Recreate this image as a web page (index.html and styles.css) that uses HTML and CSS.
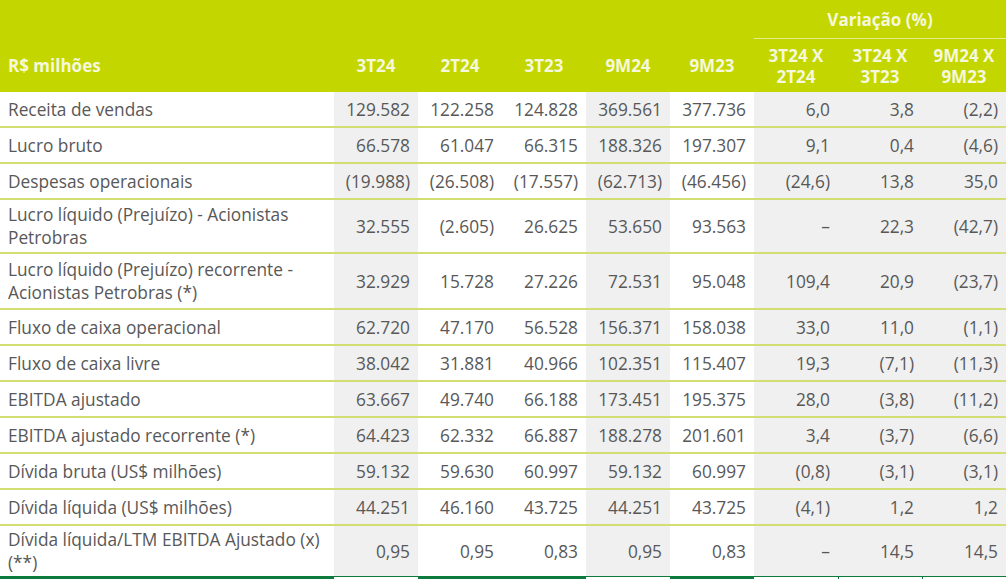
FILE: index.html
```html
<!DOCTYPE html>
<html lang="pt-BR">
<head>
<meta charset="utf-8">
<title>Destaques financeiros</title>
<link rel="stylesheet" href="styles.css">
</head>
<body>
<table class="results">
  <colgroup>
    <col class="c-label">
    <col class="c-num"><col class="c-num"><col class="c-num"><col class="c-num"><col class="c-num">
    <col class="c-num"><col class="c-num"><col class="c-last">
  </colgroup>
  <thead>
    <tr class="h1">
      <th class="blank" colspan="6"></th>
      <th class="var" colspan="3">Variação (%)</th>
    </tr>
    <tr class="h2">
      <th class="lbl">R$ milhões</th>
      <th>3T24</th>
      <th>2T24</th>
      <th>3T23</th>
      <th>9M24</th>
      <th>9M23</th>
      <th>3T24 X<br>2T24</th>
      <th>3T24 X<br>3T23</th>
      <th>9M24 X<br>9M23</th>
    </tr>
  </thead>
  <tbody>
    <tr class="row">
      <td class="lbl">Receita de vendas</td>
      <td class="g">129.582</td><td>122.258</td><td>124.828</td><td class="g">369.561</td><td>377.736</td>
      <td class="g">6,0</td><td class="g">3,8</td><td class="g">(2,2)</td>
    </tr>
    <tr class="row">
      <td class="lbl">Lucro bruto</td>
      <td class="g">66.578</td><td>61.047</td><td>66.315</td><td class="g">188.326</td><td>197.307</td>
      <td class="g">9,1</td><td class="g">0,4</td><td class="g">(4,6)</td>
    </tr>
    <tr class="row">
      <td class="lbl">Despesas operacionais</td>
      <td class="g">(19.988)</td><td>(26.508)</td><td>(17.557)</td><td class="g">(62.713)</td><td>(46.456)</td>
      <td class="g">(24,6)</td><td class="g">13,8</td><td class="g">35,0</td>
    </tr>
    <tr class="row two">
      <td class="lbl">Lucro líquido (Prejuízo) - Acionistas<br>Petrobras</td>
      <td class="g">32.555</td><td>(2.605)</td><td>26.625</td><td class="g">53.650</td><td>93.563</td>
      <td class="g">–</td><td class="g">22,3</td><td class="g">(42,7)</td>
    </tr>
    <tr class="row two tall">
      <td class="lbl">Lucro líquido (Prejuízo) recorrente -<br>Acionistas Petrobras (*)</td>
      <td class="g">32.929</td><td>15.728</td><td>27.226</td><td class="g">72.531</td><td>95.048</td>
      <td class="g">109,4</td><td class="g">20,9</td><td class="g">(23,7)</td>
    </tr>
    <tr class="row">
      <td class="lbl">Fluxo de caixa operacional</td>
      <td class="g">62.720</td><td>47.170</td><td>56.528</td><td class="g">156.371</td><td>158.038</td>
      <td class="g">33,0</td><td class="g">11,0</td><td class="g">(1,1)</td>
    </tr>
    <tr class="row">
      <td class="lbl">Fluxo de caixa livre</td>
      <td class="g">38.042</td><td>31.881</td><td>40.966</td><td class="g">102.351</td><td>115.407</td>
      <td class="g">19,3</td><td class="g">(7,1)</td><td class="g">(11,3)</td>
    </tr>
    <tr class="row">
      <td class="lbl">EBITDA ajustado</td>
      <td class="g">63.667</td><td>49.740</td><td>66.188</td><td class="g">173.451</td><td>195.375</td>
      <td class="g">28,0</td><td class="g">(3,8)</td><td class="g">(11,2)</td>
    </tr>
    <tr class="row">
      <td class="lbl">EBITDA ajustado recorrente (*)</td>
      <td class="g">64.423</td><td>62.332</td><td>66.887</td><td class="g">188.278</td><td>201.601</td>
      <td class="g">3,4</td><td class="g">(3,7)</td><td class="g">(6,6)</td>
    </tr>
    <tr class="row">
      <td class="lbl">Dívida bruta (US$ milhões)</td>
      <td class="g">59.132</td><td>59.630</td><td>60.997</td><td class="g">59.132</td><td>60.997</td>
      <td class="g">(0,8)</td><td class="g">(3,1)</td><td class="g">(3,1)</td>
    </tr>
    <tr class="row">
      <td class="lbl">Dívida líquida (US$ milhões)</td>
      <td class="g">44.251</td><td>46.160</td><td>43.725</td><td class="g">44.251</td><td>43.725</td>
      <td class="g">(4,1)</td><td class="g">1,2</td><td class="g">1,2</td>
    </tr>
    <tr class="row two last">
      <td class="lbl">Dívida líquida/LTM EBITDA Ajustado (x)<br>(**)</td>
      <td class="g">0,95</td><td>0,95</td><td>0,83</td><td class="g">0,95</td><td>0,83</td>
      <td class="g">–</td><td class="g">14,5</td><td class="g">14,5</td>
    </tr>
  </tbody>
  <tfoot>
    <tr class="foot">
      <td></td><td class="g"></td><td></td><td></td><td class="g"></td><td></td>
      <td class="v"></td><td class="v"></td><td class="v"></td>
    </tr>
  </tfoot>
</table>
</body>
</html>
```

FILE: styles.css
```css
html, body {
  margin: 0;
  padding: 0;
  background: #ffffff;
}

.results {
  width: 1006px;
  table-layout: fixed;
  border-collapse: separate;
  border-spacing: 0;
  font-family: "Open Sans", "Noto Sans", sans-serif;
  font-size: 17.3px;
  color: #585858;
}

.c-label { width: 334px; }
.c-num { width: 84px; }
.c-last { width: 84px; }

/* header */
.results thead th {
  background: #c4d600;
  color: #f5f8dc;
  font-weight: 700;
  font-size: 17px;
  line-height: 21px;
  padding: 0;
  text-align: center;
}

.h1 { height: 39px; }
.h1 .var {
  border-bottom: 1px solid rgba(255, 255, 255, 0.55);
  vertical-align: middle;
  padding-top: 1px;
}

.h2 { height: 53px; }
.h2 th { vertical-align: middle; padding-top: 1px; }
.h2 th.lbl {
  text-align: left;
  padding-left: 8px;
}

/* body rows */
.row { height: 36px; }
.row td {
  padding: 3px 8px 3px 4px;
  line-height: 23px;
  text-align: right;
  vertical-align: middle;
  white-space: nowrap;
  border-bottom: 2px solid #d2de72;
}
.row.tall td { padding-top: 4px; padding-bottom: 4px; }
.row td.lbl {
  text-align: left;
  padding-left: 8px;
  padding-right: 2px;
}
.row td.g { background: #f0f0f0; }
.row.last td { border-bottom: none; padding-top: 2px; padding-bottom: 2px; }

/* footer strip */
.foot td {
  height: 4px;
  padding: 0;
  background: #0b7b3e;
}
.foot td.g,
.foot td.v {
  background: #ffffff;
  border-top: 1px solid #0b7b3e;
  height: 3px;
}
.foot td.v + td.v { border-left: 1px solid #0b7b3e; }
```
